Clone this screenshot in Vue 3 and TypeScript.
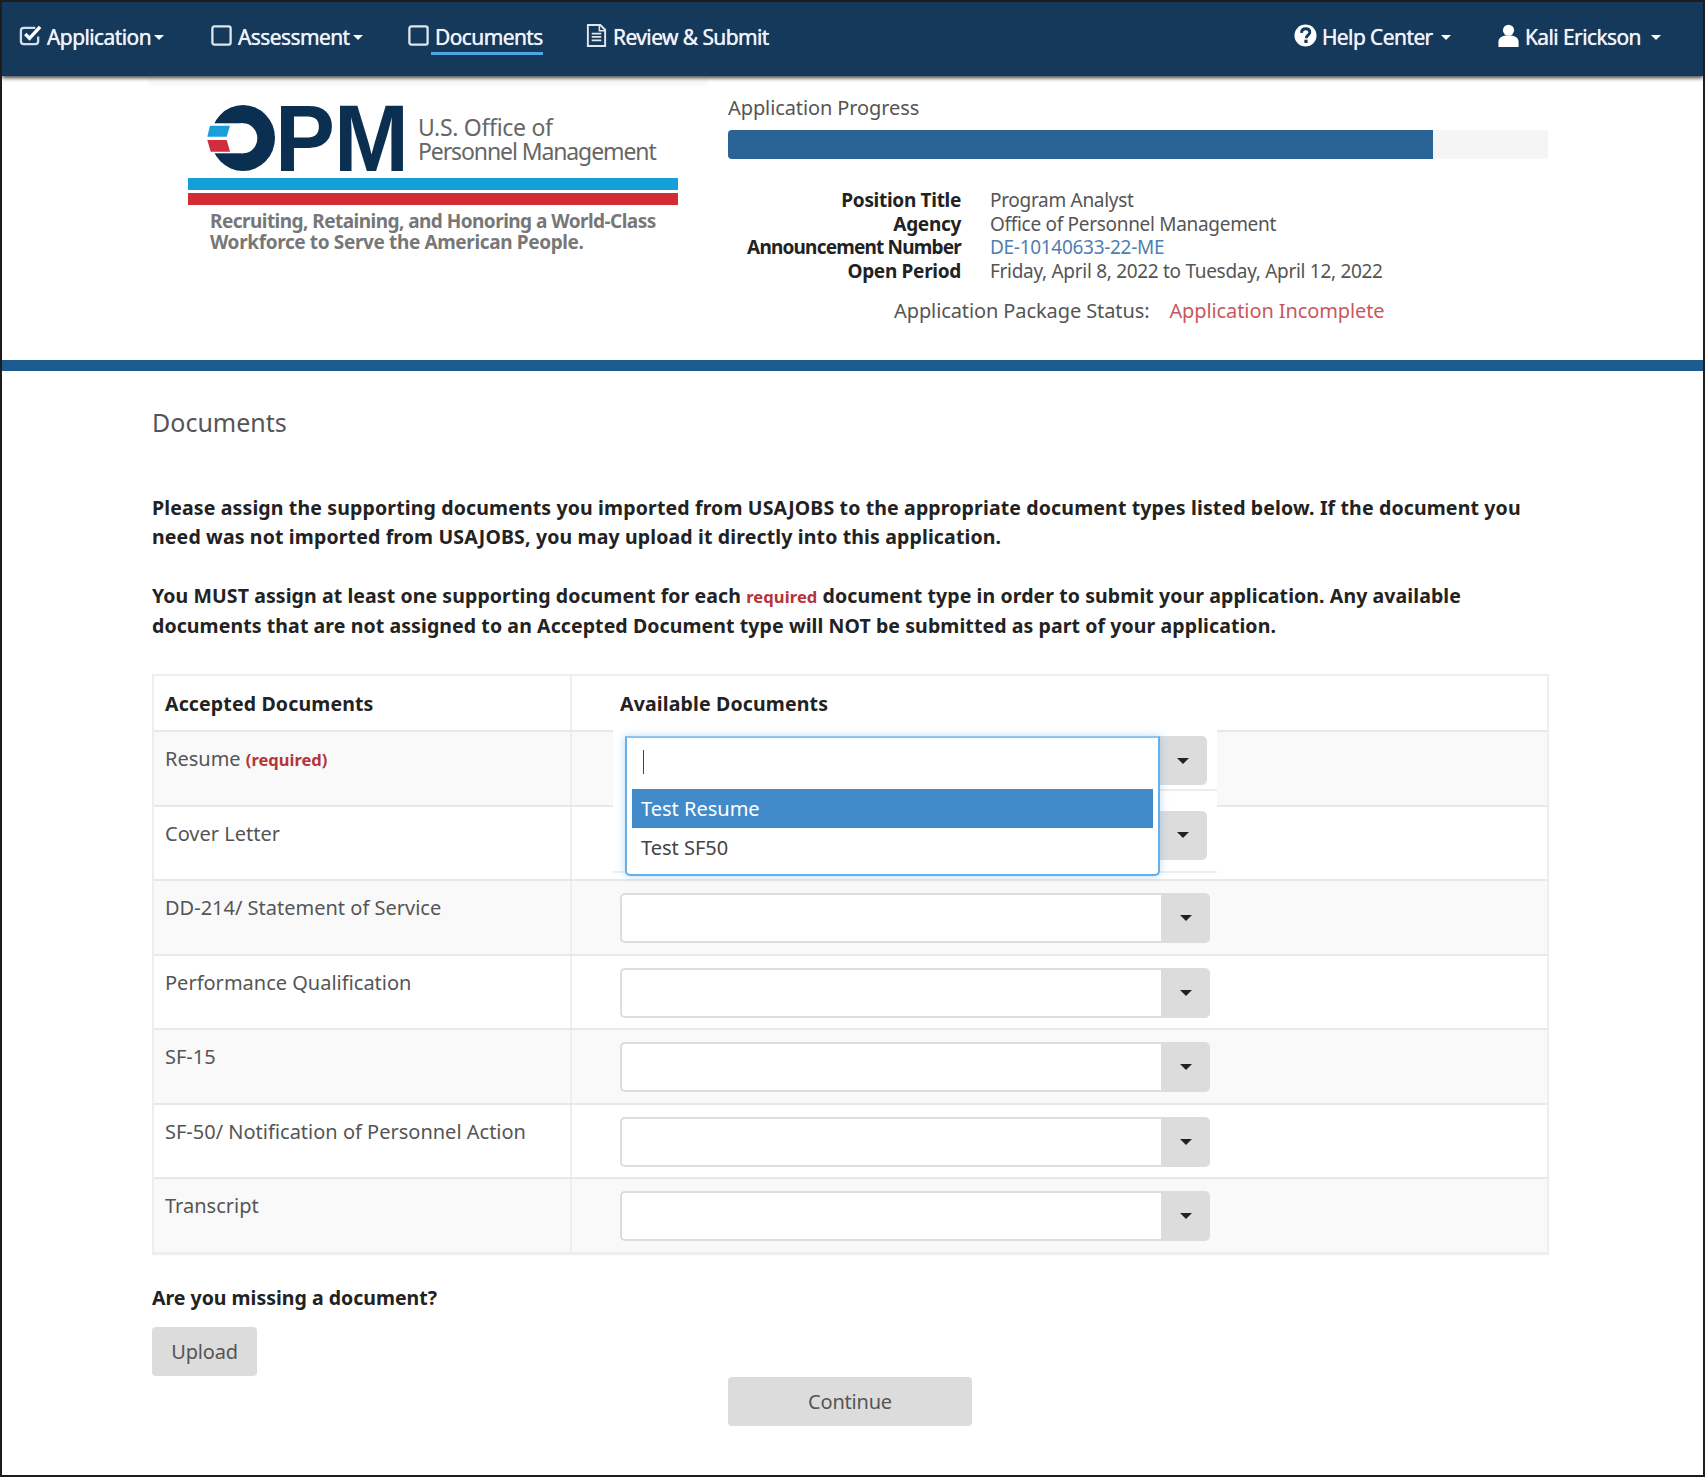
<script setup lang="ts">
const rows = [
  { name: 'DD-214/ Statement of Service', shaded: true },
  { name: 'Performance Qualification', shaded: false },
  { name: 'SF-15', shaded: true },
  { name: 'SF-50/ Notification of Personnel Action', shaded: false },
  { name: 'Transcript', shaded: true },
]
const info = [
  { k: 'Position Title', v: 'Program Analyst', link: false, long: false },
  { k: 'Agency', v: 'Office of Personnel Management', link: false, long: false },
  { k: 'Announcement Number', v: 'DE-10140633-22-ME', link: true, long: true },
  { k: 'Open Period', v: 'Friday, April 8, 2022 to Tuesday, April 12, 2022', link: false, long: false },
]
</script>

<template>
  <div class="page">
    <nav class="nav">
      <div class="nav-left">
        <a class="nav-item w-app">
          <svg class="ico" viewBox="0 0 24 24"><path d="M17 4H5a3 3 0 0 0-3 3v11a3 3 0 0 0 3 3h12a3 3 0 0 0 3-3v-5" fill="none" stroke="#d5dee7" stroke-width="2.4"/><path d="M6.500 10.500l4.500 4.500L22 3" fill="none" stroke="#fff" stroke-width="3.600"/></svg>
          <span>Application</span><i class="caret"></i>
        </a>
        <a class="nav-item w-ass">
          <svg class="ico" viewBox="0 0 24 24"><rect x="2.500" y="2.500" width="19" height="19" rx="2" fill="none" stroke="#dfe6ec" stroke-width="2.400"/></svg>
          <span>Assessment</span><i class="caret"></i>
        </a>
        <a class="nav-item w-doc">
          <svg class="ico" viewBox="0 0 24 24"><rect x="2.500" y="2.500" width="19" height="19" rx="2" fill="none" stroke="#dfe6ec" stroke-width="2.400"/></svg>
          <span class="active">Documents</span>
        </a>
        <a class="nav-item">
          <svg class="ico" viewBox="0 0 24 24"><path d="M3 1h13l5 5v17H3z" fill="none" stroke="#dfe6ec" stroke-width="2"/><path d="M15 1v6h6" fill="none" stroke="#dfe6ec" stroke-width="1.600"/><path d="M7 10h10M7 13.500h10M7 17h10" fill="none" stroke="#dfe6ec" stroke-width="1.800"/></svg>
          <span>Review &amp; Submit</span>
        </a>
      </div>
      <div class="nav-right">
        <a class="nav-item w-help">
          <svg class="ico" viewBox="0 0 24 24"><circle cx="12" cy="12" r="11.500" fill="#fff"/><path d="M7.800 9.200C8 6.600 9.800 5 12.200 5c2.600 0 4.300 1.500 4.300 3.600 0 3.200-3.700 3-3.700 6.200" fill="none" stroke="#15395b" stroke-width="3"/><rect x="10.800" y="16.400" width="3.400" height="3.400" fill="#15395b"/></svg>
          <span>Help Center</span><i class="caret wide"></i>
        </a>
        <a class="nav-item user">
          <svg class="ico" viewBox="0 0 24 24"><circle cx="12" cy="6.500" r="5.800" fill="#fff"/><path d="M1.500 24v-5.500c0-4.500 4.500-6.500 10.500-6.500s10.500 2 10.500 6.500V24z" fill="#fff"/></svg>
          <span>Kali Erickson</span><i class="caret wide"></i>
        </a>
      </div>
    </nav>

    <header class="head">
      <div class="faint"></div>
      <div class="logo">
        <div class="logo-top">
          <svg class="logo-o" viewBox="0 0 71 68">
            <ellipse cx="37" cy="34" rx="32" ry="33" fill="#0a2f50"/>
            <rect x="0" y="19.300" width="37" height="30" fill="#fff"/>
            <ellipse cx="37" cy="34.300" rx="14.300" ry="15" fill="#fff"/>
            <path d="M4 21.700H24L20.700 32.700H1.300z" fill="#1b9fdb"/>
            <path d="M1.300 36H20.700L24 47.700H4.700z" fill="#d22d3f"/>
          </svg>
          <span class="logo-pm">PM</span>
          <span class="logo-name"><span>U.S. Office of</span><span class="tight">Personnel Management</span></span>
        </div>
        <div class="stripe blue"></div>
        <div class="stripe red"></div>
        <p class="tagline">Recruiting, Retaining, and Honoring a World-Class<br /><span class="tag2">Workforce to Serve the American People.</span></p>
      </div>
      <div class="summary">
        <div class="prog-label">Application Progress</div>
        <div class="track"><div class="fill"></div></div>
        <dl class="info">
          <template v-for="r in info" :key="r.k">
            <dt :class="{ long: r.long }">{{ r.k }}</dt>
            <dd :class="{ link: r.link }">{{ r.v }}</dd>
          </template>
        </dl>
        <div class="status"><span>Application Package Status:</span><span class="bad">Application Incomplete</span></div>
      </div>
    </header>
    <div class="band"></div>

    <main class="main">
      <h1>Documents</h1>
      <p class="lead">Please assign the supporting documents you imported from USAJOBS to the appropriate document types listed below. If the document you<br />need was not imported from USAJOBS, you may upload it directly into this application.</p>
      <p class="lead second">You MUST assign at least one supporting document for each <span class="req">required</span> document type in order to submit your application. Any available<br />documents that are not assigned to an Accepted Document type will NOT be submitted as part of your application.</p>

      <div class="tbl">
        <div class="row head-row">
          <div class="c1"><b>Accepted Documents</b></div>
          <div class="c2 pad"><b>Available Documents</b></div>
        </div>
        <div class="row shaded open first">
          <div class="c1">Resume <span class="req">(required)</span></div>
          <div class="c2">
            <div class="veil"><i class="l1"></i><i class="l2"></i></div>
            <div class="listbox">
              <div class="input-line"><i class="cursor"></i></div>
              <div class="opt sel">Test Resume</div>
              <div class="opt">Test SF50</div>
            </div>
            <div class="sel-wrap"><div class="box hidden"></div><div class="addon"><i class="caret dark"></i></div></div>
          </div>
        </div>
        <div class="row open">
          <div class="c1">Cover Letter</div>
          <div class="c2"><div class="sel-wrap"><div class="box hidden"></div><div class="addon"><i class="caret dark"></i></div></div></div>
        </div>
        <div v-for="r in rows" :key="r.name" class="row" :class="{ shaded: r.shaded }">
          <div class="c1">{{ r.name }}</div>
          <div class="c2"><div class="sel-wrap"><div class="box"></div><div class="addon"><i class="caret dark"></i></div></div></div>
        </div>
      </div>

      <div class="missing">Are you missing a document?</div>
      <button class="btn upload">Upload</button>
      <div class="continue-row"><button class="btn continue">Continue</button></div>
    </main>
  </div>
</template>

<style scoped>
.page {
  width: 1705px; height: 1477px; box-sizing: border-box; overflow: hidden;
  border: 2px solid #1c1c1c; background: #fff; color: #555;
  font-family: "Noto Sans", sans-serif; font-size: 20px;
  position: relative;
}
.nav {
  height: 74px; background: #15395b; display: flex; justify-content: space-between; align-items: flex-start;
  box-shadow: 0 2px 4px rgba(0,0,0,.75); position: relative; z-index: 5;
  padding: 0 42px 0 17px; color: #fff;
}
.nav-left, .nav-right { display: flex; height: 100%; }
.nav-item { display: flex; align-items: center; height: 70px; font-size: 21px; letter-spacing: -.6px; color: #eef2f6; text-shadow: 0 0 .7px #fff; }
.w-app { width: 191px; } .w-ass { width: 197px; } .w-doc { width: 178px; }
.w-help { width: 203px; }
.ico { width: 23px; height: 23px; margin-right: 5px; margin-top: -4px; flex: none; }
.nav-item .active { position: relative; }
.nav-item .active::after { content: ""; position: absolute; left: -4px; right: 0; bottom: -4px; height: 3px; background: #4ea6e4; }
.caret { display: inline-block; width: 0; height: 0; border-left: 5px solid transparent; border-right: 5px solid transparent; border-top: 5px solid #fff; margin-left: 3px; }
.caret.wide { margin-left: 8px; }
.user .caret.wide { margin-left: 10px; }
.caret.dark { border-top-color: #222; border-left-width: 6px; border-right-width: 6px; border-top-width: 6px; margin: 0; }

.head { display: flex; height: 284px; padding-left: 186px; position: relative; }
.faint { position: absolute; left: 146px; top: 2px; width: 560px; height: 8px; background: #fafafa; }
.logo { width: 490px; margin-right: 50px; padding-top: 28px; flex: none; position: relative; }
.logo-top { display: flex; align-items: flex-start; height: 74px; padding-left: 18px; }
.logo-o { width: 71px; height: 68px; flex: none; margin-right: -2px; }
.logo-pm { font-family: "Liberation Sans", sans-serif; font-weight: 700; font-size: 90px; line-height: 68px; color: #0a2f50; letter-spacing: -1px; margin-right: 10px; transform: scaleY(1.05); }
.logo-name { display: flex; flex-direction: column; font-size: 23px; line-height: 24px; color: #666; padding-top: 11px; letter-spacing: -.3px; white-space: nowrap; }
.logo-name .tight { letter-spacing: -1.1px; }
.stripe { height: 12px; }
.stripe.blue { background: #139fd8; margin-bottom: 3px; }
.stripe.red { background: #d22d35; }
.tagline { margin: 6px 0 0 22px; font-size: 19px; line-height: 21px; font-weight: 700; color: #777; letter-spacing: -.54px; white-space: nowrap; }
.tag2 { letter-spacing: -.37px; }
.summary { width: 820px; flex: none; padding-top: 20px; }
.prog-label { font-size: 20px; line-height: 24px; letter-spacing: -.1px; }
.track { height: 29px; margin-top: 10px; background: #f5f5f5; border-radius: 4px; overflow: hidden; }
.fill { width: 705px; height: 100%; background: #2a6496; }
.info { display: grid; grid-template-columns: 233px 1fr; column-gap: 29px; margin: 30px 0 0; font-size: 19px; line-height: 23.600px; letter-spacing: -.3px; }
.info dt { text-align: right; font-weight: 700; color: #222; }
.info dt.long { letter-spacing: -.8px; }
.info dd { margin: 0; }
.info dd.link { color: #4f7fb0; }
.status { display: flex; gap: 20px; margin: 15px 0 0 166px; font-size: 20px; line-height: 26px; letter-spacing: -.1px; }
.bad { color: #c9575c; }
.band { height: 11px; background: #1c5a8f; }

.main { padding: 0 0 0 150px; width: 1397px; }
h1 { margin: 35px 0 0; font-size: 25px; line-height: 32px; font-weight: 400; color: #555; }
.lead { margin: 55px 0 0; font-weight: 700; font-size: 19.500px; line-height: 29px; color: #222; white-space: nowrap; letter-spacing: .14px; }
.lead.second { margin-top: 30px; letter-spacing: .09px; }
.req { color: #b5343a; font-weight: 700; font-size: .85em; }
.c1 .req { font-size: 16.500px; }
.tbl { margin-top: 34px; border: 2px solid #eee; border-bottom-width: 3px; border-top-width: 2px; }
.row { display: grid; grid-template-columns: 418px 1fr; height: 74.500px; box-sizing: border-box; border-top: 2px solid #e8e8e8; }
.row.head-row { height: 54px; border-top: 0; color: #222; }
.row.shaded { background: #f9f9f9; }
.c1 { padding: 12px 12px 10px 11px; border-right: 2px solid #eee; line-height: 30px; }
.c2 { padding: 12px 0 0 48px; position: relative; }
.c2.pad { padding-top: 12px; line-height: 30px; }
.head-row b { font-weight: 700; font-size: 19.500px; color: #222; letter-spacing: .15px; }
.head-row .c1, .head-row .c2 { padding-top: 13px; }
.sel-wrap { display: flex; width: 590px; height: 50px; position: relative; z-index: 2; }
.box { flex: 1; background: #fff; border: 2px solid #ddd; border-right: 0; border-radius: 5px 0 0 5px; box-sizing: border-box; }
.box.hidden { visibility: hidden; }
.addon { width: 49px; background: #dcdcdc; display: flex; align-items: center; justify-content: center; border-radius: 0 5px 5px 0; }
.open .c2 { padding-top: 4px; }
.open .sel-wrap { width: 587px; height: 49px; }
.open .addon { width: 48px; }
.veil { position: absolute; left: 41px; top: -7px; width: 604px; height: 150px; background: #fff; z-index: 1; }
.veil i { position: absolute; left: 0; right: 0; height: 2px; background: #ededed; }
.veil .l1 { top: 64px; left: 545px; }
.veil .l2 { top: 146px; }
.listbox { position: absolute; left: 53px; top: 4px; width: 535px; height: 140px; box-sizing: border-box; z-index: 3; background: #fff; border: 2px solid #66afe9; border-radius: 0 0 5px 5px; border-top-color: #8cc4ee; box-shadow: 0 0 8px rgba(102,175,233,.45); padding: 0 5px; }
.input-line { height: 51px; padding: 12px 11px; box-sizing: border-box; }
.cursor { display: block; width: 1px; height: 24px; background: #444; }
.opt { height: 39px; line-height: 39px; padding: 0 9px; color: #444; }
.opt.sel { background: #428bca; color: #fff; }
.missing { margin-top: 30px; font-weight: 700; color: #222; font-size: 19.500px; line-height: 26px; }
.btn { display: block; border: 0; background: #dcdcdc; color: #555; font-family: inherit; font-size: 20px; border-radius: 4px; padding: 0; height: 49px; letter-spacing: -.2px; }
.upload { width: 105px; margin-top: 16px; }
.continue-row { display: flex; margin: 1px 0 0 576px; }
.continue { width: 244px; }
</style>
